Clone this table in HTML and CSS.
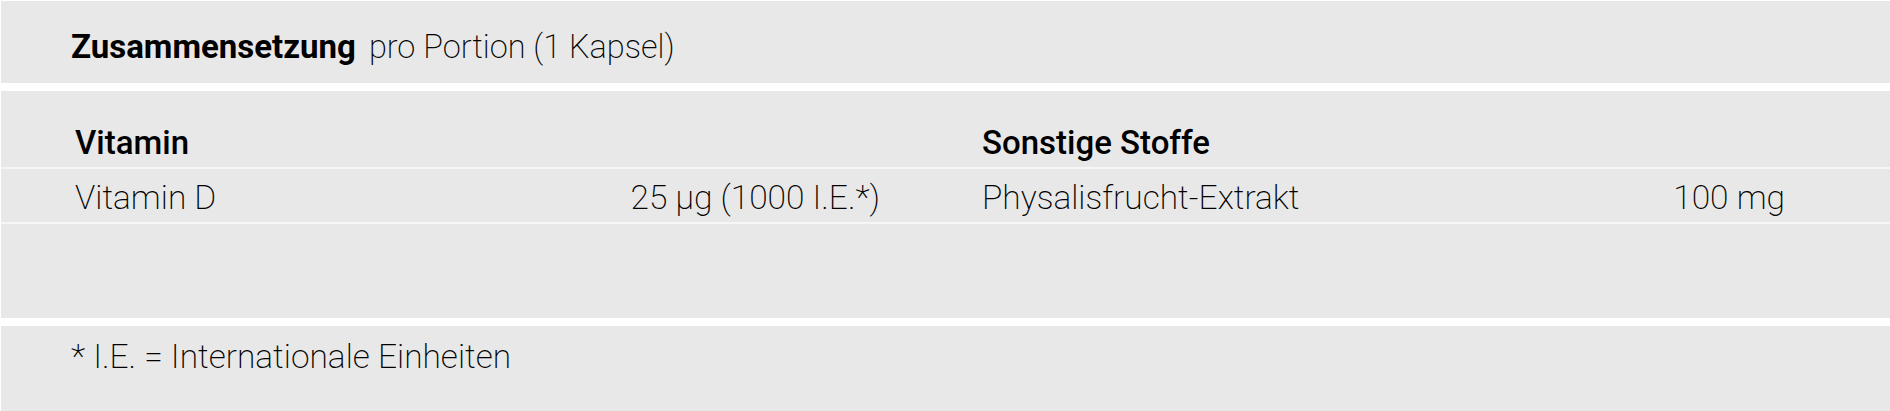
FILE: index.html
```html
<!DOCTYPE html>
<html lang="de">
<head>
<meta charset="utf-8">
<title>Zusammensetzung</title>
<link rel="stylesheet" href="styles.css">
</head>
<body>
<div class="page">
  <section class="panel head">
    <h2 class="title">Zusammensetzung</h2>
    <span class="subtitle">pro Portion (1 Kapsel)</span>
  </section>
  <section class="panel table">
    <div class="row row-head">
      <div class="cell cell-left"><span class="th">Vitamin</span></div>
      <div class="cell"><span class="th">Sonstige Stoffe</span></div>
    </div>
    <div class="row row-data">
      <div class="cell cell-left"><span>Vitamin D</span><span>25 µg (1000 I.E.*)</span></div>
      <div class="cell"><span>Physalisfrucht-Extrakt</span><span>100 mg</span></div>
    </div>
  </section>
  <section class="panel foot">
    <p class="note">* I.E. = Internationale Einheiten</p>
  </section>
</div>
</body>
</html>
```
FILE: styles.css
```css
html, body {
  margin: 0;
  padding: 0;
  background: #ffffff;
}
body {
  font-family: Roboto, "Liberation Sans", sans-serif;
  color: #000;
  font-size: 33.5px;
  line-height: 40px;
  font-weight: 200;
}
.page {
  display: flex;
  flex-direction: column;
  gap: 8px;
  padding: 1px 0 0 1px;
}
.panel {
  background: #e8e8e8;
}
.head {
  height: 82px;
  box-sizing: border-box;
  padding: 26px 0 0 70px;
  display: flex;
  align-items: baseline;
  gap: 13px;
}
.title {
  margin: 0;
  font-size: 33px;
  font-weight: 700;
  color: #000;
  line-height: 40px;
}
.subtitle {
  font-size: 32.5px;
}
.table {
  height: 227px;
  box-sizing: border-box;
}
.row {
  display: grid;
  grid-template-columns: 907px 907px;
  padding-left: 74px;
  border-bottom: 2px solid #f6f6f6;
}
.row-head {
  height: 78px;
  box-sizing: border-box;
  align-items: end;
  padding-bottom: 4px;
}
.row-data {
  padding-top: 9px;
  padding-bottom: 4px;
}
.cell {
  display: flex;
  justify-content: space-between;
  padding-right: 104px;
}
.cell-left {
  padding-right: 102px;
}
.th {
  font-weight: 500;
  font-size: 33px;
  color: #000;
}
.foot {
  height: 85px;
  box-sizing: border-box;
  padding: 11px 0 0 70px;
}
.note {
  margin: 0;
}
```
